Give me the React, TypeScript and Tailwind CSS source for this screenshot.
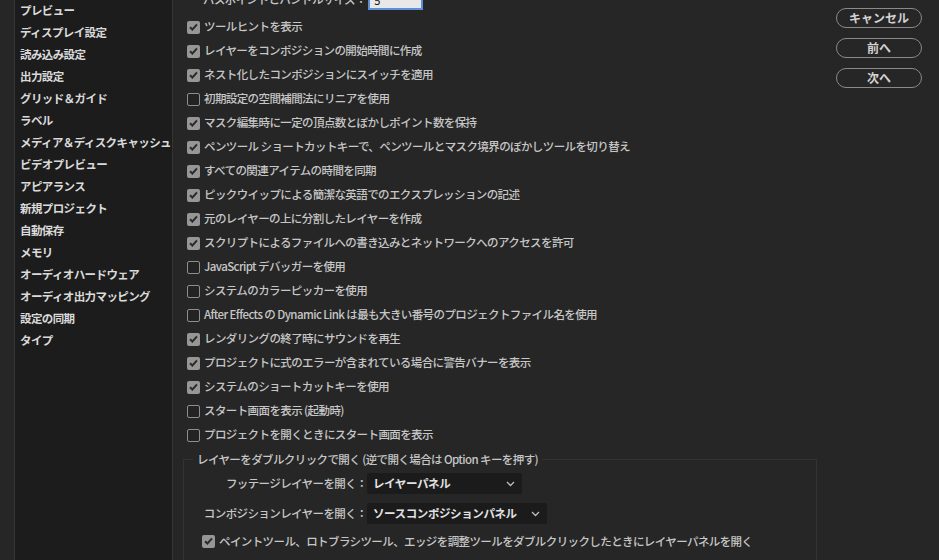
import React from 'react'

const font = { fontFamily: '"Noto Sans CJK JP", "Noto Sans", sans-serif' }

const sidebar = [
  'プレビュー',
  'ディスプレイ設定',
  '読み込み設定',
  '出力設定',
  'グリッド＆ガイド',
  'ラベル',
  'メディア＆ディスクキャッシュ',
  'ビデオプレビュー',
  'アピアランス',
  '新規プロジェクト',
  '自動保存',
  'メモリ',
  'オーディオハードウェア',
  'オーディオ出力マッピング',
  '設定の同期',
  'タイプ',
]

const options: [string, boolean][] = [
  ['ツールヒントを表示', true],
  ['レイヤーをコンポジションの開始時間に作成', true],
  ['ネスト化したコンポジションにスイッチを適用', true],
  ['初期設定の空間補間法にリニアを使用', false],
  ['マスク編集時に一定の頂点数とぼかしポイント数を保持', true],
  ['ペンツール ショートカットキーで、ペンツールとマスク境界のぼかしツールを切り替え', true],
  ['すべての関連アイテムの時間を同期', true],
  ['ピックウイップによる簡潔な英語でのエクスプレッションの記述', true],
  ['元のレイヤーの上に分割したレイヤーを作成', true],
  ['スクリプトによるファイルへの書き込みとネットワークへのアクセスを許可', true],
  ['JavaScript デバッガーを使用', false],
  ['システムのカラーピッカーを使用', false],
  ['After Effects の Dynamic Link は最も大きい番号のプロジェクトファイル名を使用', false],
  ['レンダリングの終了時にサウンドを再生', true],
  ['プロジェクトに式のエラーが含まれている場合に警告バナーを表示', true],
  ['システムのショートカットキーを使用', true],
  ['スタート画面を表示 (起動時)', false],
  ['プロジェクトを開くときにスタート画面を表示', false],
]

// shared label style, narrowed to match the reference's glyph widths
const txt = 'text-[11.5px] tracking-[-0.6px] font-medium text-[#c6c6c6] whitespace-nowrap'

function Checkbox({ checked }: { checked: boolean }) {
  if (checked) {
    return (
      <span className="flex h-[13px] w-[13px] shrink-0 items-center justify-center rounded-[2px] bg-[#969696]">
        <svg width="9" height="8" viewBox="0 0 9 8">
          <path d="M1 4.2 L3.4 6.5 L8 1.3" fill="none" stroke="#2b2b2b" strokeWidth="2" />
        </svg>
      </span>
    )
  }
  return <span className="h-[13px] w-[13px] shrink-0 rounded-[2px] border-[1.5px] border-[#8e8e8e] bg-[#232323]" />
}

function Option({ label, checked }: { label: string; checked: boolean }) {
  return (
    <div className="flex h-[24px] items-center gap-[4px]">
      <Checkbox checked={checked} />
      <span className={txt}>{label}</span>
    </div>
  )
}

function Select({ value, width }: { value: string; width: string }) {
  return (
    <div className={`flex h-[21px] items-center justify-between rounded-[2px] bg-[#1b1b1b] pl-[6px] pr-[7px] ${width}`}>
      <span className="text-[11.5px] tracking-[-0.4px] font-bold text-[#e2e2e2]">{value}</span>
      <svg width="9" height="6" viewBox="0 0 9 6">
        <path d="M1 1 L4.5 4.5 L8 1" fill="none" stroke="#bdbdbd" strokeWidth="1.3" />
      </svg>
    </div>
  )
}

function PillButton({ label }: { label: string }) {
  return (
    <button className="h-[20px] w-[86px] rounded-full border-[1.5px] border-[#8a8a8a] bg-[#262626] text-[12px] font-bold text-[#d2d2d2]">
      {label}
    </button>
  )
}

export default function App() {
  return (
    <div className="flex h-[560px] w-[939px] overflow-hidden bg-[#262626]" style={font}>
      <div className="w-[14px] shrink-0" />
      <div className="w-[159px] shrink-0 border-x border-[#343434] bg-[#1c1c1c] pl-[5px]">
        {sidebar.map((s) => (
          <div key={s} className="flex h-[22px] items-center text-[11.5px] tracking-[-0.6px] font-bold text-[#dadada] whitespace-nowrap">
            {s}
          </div>
        ))}
      </div>

      <div className="flex min-w-0 flex-1 pl-[10px]">
        <div className="min-w-0 flex-1">
          <div className="ml-[4px] mt-[-12px] mb-[3px] flex h-[24px] items-center pl-[16px]">
            <span className={txt}>パスポイントとハンドルサイズ：</span>
            <div className="ml-[2px] flex h-[19px] w-[55px] items-center border-2 border-[#5b8fd8] bg-[#e8e8e8] pl-[4px] text-[11px] text-[#111]">
              5
            </div>
          </div>
          <div className="pl-[4px]">
            {options.map(([l, c]) => (
              <Option key={l} label={l} checked={c} />
            ))}
          </div>

          <fieldset className="mt-[4px] w-[634px] border border-[#333333] pl-[16px] pb-[10px]">
            <legend className={`ml-[-7px] px-[4px] ${txt}`}>
              レイヤーをダブルクリックで開く (逆で開く場合は Option キーを押す)
            </legend>
            <div className="mt-[5px] flex items-center">
              <span className={`w-[167px] text-right ${txt}`}>フッテージレイヤーを開く：</span>
              <Select value="レイヤーパネル" width="w-[155px]" />
            </div>
            <div className="mt-[9px] flex items-center">
              <span className={`w-[167px] text-right ${txt}`}>コンポジションレイヤーを開く：</span>
              <Select value="ソースコンポジションパネル" width="w-[180px]" />
            </div>
            <div className="mt-[5px] pl-[2px]">
              <Option label="ペイントツール、ロトブラシツール、エッジを調整ツールをダブルクリックしたときにレイヤーパネルを開く" checked={true} />
            </div>
          </fieldset>
        </div>

        <div className="mr-[17px] flex w-[86px] shrink-0 flex-col gap-[10px] pt-[8px]">
          <PillButton label="キャンセル" />
          <PillButton label="前へ" />
          <PillButton label="次へ" />
        </div>
      </div>
    </div>
  )
}
